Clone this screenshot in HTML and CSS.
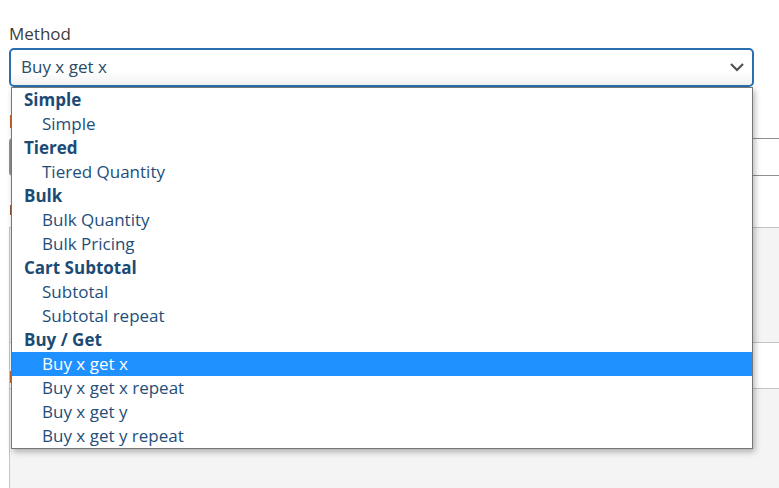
FILE: index.html
```html
<!DOCTYPE html>
<html>
<head>
<meta charset="utf-8">
<link rel="stylesheet" href="styles.css">
</head>
<body>
<div class="page">
  <div class="field">
    <label class="label">Method</label>
    <div class="select-wrap">
      <div class="select">
        <span class="select-value">Buy x get x</span>
        <svg class="chevron" width="16" height="10" viewBox="0 0 16 10"><path d="M2 2 L8 8 L14 2" fill="none" stroke="#505050" stroke-width="2.2"/></svg>
      </div>
      <ul class="menu">
        <li class="group">Simple</li>
        <li class="opt">Simple</li>
        <li class="group">Tiered</li>
        <li class="opt">Tiered Quantity</li>
        <li class="group">Bulk</li>
        <li class="opt">Bulk Quantity</li>
        <li class="opt">Bulk Pricing</li>
        <li class="group">Cart Subtotal</li>
        <li class="opt">Subtotal</li>
        <li class="opt">Subtotal repeat</li>
        <li class="group">Buy / Get</li>
        <li class="opt active">Buy x get x</li>
        <li class="opt">Buy x get x repeat</li>
        <li class="opt">Buy x get y</li>
        <li class="opt">Buy x get y repeat</li>
      </ul>
    </div>
  </div>

  <div class="bg-mark orange"></div>
  <div class="bg-input"></div>
  <div class="bg-mark brown"></div>
  <div class="bg-box">
    <div class="bg-box-top"></div>
    <div class="bg-row"><span class="bg-row-mark"></span></div>
    <div class="bg-box-bottom"></div>
  </div>
</div>
</body>
</html>
```

FILE: styles.css
```css
html, body {
  margin: 0;
  padding: 0;
  background: #ffffff;
  font-family: "Open Sans", "Noto Sans", sans-serif;
  font-size: 17px;
  overflow: hidden;
  height: 488px;
}

.page {
  padding: 23px 25px 0 9px;
  width: 779px;
  box-sizing: border-box;
}

.label {
  display: block;
  line-height: 22px;
  color: #3c3c3c;
  margin-bottom: 3px;
}

.select-wrap {
  position: relative;
  width: 745px;
}

.select {
  box-sizing: border-box;
  height: 39px;
  border: 2px solid #2a6fb0;
  border-radius: 5px;
  padding: 6px 10px 7px 10px;
  line-height: 22px;
  background: linear-gradient(#ffffff 60%, #f2f2f2);
  display: flex;
  justify-content: space-between;
  align-items: center;
}

.select-value {
  color: #2b4a66;
}

.chevron {
  margin-right: -3px;
}

.menu {
  position: absolute;
  left: 2px;
  top: 39px;
  width: 742px;
  box-sizing: border-box;
  margin: 0;
  padding: 0;
  list-style: none;
  background: #ffffff;
  border: 1px solid #767676;
  box-shadow: 2px 3px 6px rgba(0, 0, 0, 0.28);
  z-index: 10;
}

.menu li {
  height: 24px;
  line-height: 24px;
  white-space: nowrap;
}

.group {
  font-weight: 700;
  color: #1b4b75;
  padding-left: 12px;
}

.opt {
  color: #1e4e79;
  padding-left: 30px;
}

.opt.active {
  background: #1e90ff;
  color: #ffffff;
}

.bg-mark {
  width: 3px;
  height: 13px;
  margin-left: 1px;
}

.orange {
  margin-top: 28px;
  background: #c0612a;
  margin-bottom: 10px;
}

.brown {
  margin-top: 29px;
  height: 10px;
  background: #8a5a3a;
  margin-bottom: 12px;
}

.bg-input {
  width: 800px;
  height: 38px;
  box-sizing: border-box;
  border: 1px solid #8c8f94;
  border-left: 3px solid #8c8f94;
  border-radius: 4px;
}

.bg-box {
  width: 800px;
  border-left: 1px solid #c3c4c7;
  border-top: 1px solid #c3c4c7;
  background: #f4f4f4;
}

.bg-box-top {
  height: 114px;
}

.bg-row {
  height: 45px;
  background: #ffffff;
  border-top: 1px solid #c3c4c7;
  border-bottom: 1px solid #c3c4c7;
  display: flex;
  align-items: flex-end;
}

.bg-row-mark {
  width: 3px;
  height: 12px;
  margin-bottom: 5px;
  background: #c0612a;
}

.bg-box-bottom {
  height: 120px;
}
```
